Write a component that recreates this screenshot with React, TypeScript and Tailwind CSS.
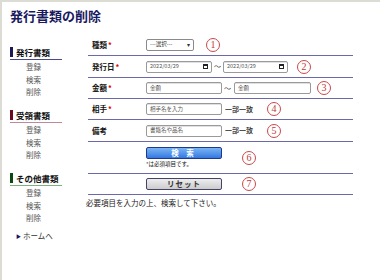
import React from "react";

const Circ = ({ n, cls }: { n: string; cls: string }) => (
  <span
    className={`flex items-center justify-center w-[14px] h-[14px] rounded-full border border-[#c84848] text-[#c03838] text-[10px] leading-none font-['Liberation_Serif',serif] ${cls}`}
  >
    {n}
  </span>
);

const Req = () => <span className="text-[#e00000] ml-[1px]">*</span>;

const Box = ({ w, children }: { w: string; children?: React.ReactNode }) => (
  <div
    className={`${w} h-[12px] border border-[#9a9a9a] rounded-[2px] bg-white flex items-center px-[3px] text-[5.5px] text-[#555] shadow-[inset_0_1px_0_#e0e0e0]`}
  >
    {children}
  </div>
);

const Section = ({
  title,
  bar,
  line,
  last,
}: {
  title: string;
  bar: string;
  line: string;
  last?: boolean;
}) => (
  <div className={last ? "" : "mb-[11.5px]"}>
    <div className={`border-b ${line} pb-[2px]`}>
      <span
        className={`block border-l-[3px] ${bar} pl-[3px] text-[8.5px] leading-[10px] font-bold text-[#111]`}
      >
        {title}
      </span>
    </div>
    <ul className="mt-[1px] pl-[16px]">
      {["登録", "検索", "削除"].map((t) => (
        <li key={t} className="text-[7.5px] leading-[12.5px] text-[#555]">
          {t}
        </li>
      ))}
    </ul>
  </div>
);

export default function App() {
  const row = "flex items-center border-b border-[#6a6aaa]";
  const label = "w-[58px] pl-[4px] text-[7.5px] font-bold text-[#111]";
  return (
    <div className="w-[380px] h-[280px] bg-white border-t-2 border-l-2 border-[#dcdcd4] overflow-hidden font-['Noto_Sans_CJK_JP',sans-serif]">
      <h1 className="pl-2 pt-[6px] text-[13px] leading-[16px] font-bold text-[#1a1a60]">
        発行書類の削除
      </h1>
      <div className="flex">
        <div className="ml-2 w-[52px] pt-[23px]">
          <Section title="発行書類" bar="border-[#1a1a5a]" line="border-[#4a4a8a]" />
          <Section title="受領書類" bar="border-[#6a0a1a]" line="border-[#c08898]" />
          <Section title="その他書類" bar="border-[#0a4a10]" line="border-[#80b080]" last />
          <div className="mt-[5px] pl-[6px] flex items-center text-[7.5px] leading-[12.5px] text-[#333]">
            <span className="text-[5px] text-[#1a1a5a] mr-[2px]">▶</span>
            ホームへ
          </div>
        </div>
        <div className="ml-[24px] w-[267px] pt-[10px]">
          <div className="ml-[2px] w-[265px]">
            <div className={`${row} h-[22px]`}>
              <div className={label}>
                種類<Req />
              </div>
              <div className="w-[48px] h-[12px] border border-[#8a8a8a] rounded-[2px] bg-white flex items-center justify-between px-[3px] text-[5.5px] text-[#333]">
                <span>---選択---</span>
                <span className="text-[6px]">▾</span>
              </div>
              <Circ n="1" cls="ml-[12px]" />
            </div>
            <div className={`${row} h-[22px]`}>
              <div className={label}>
                発行日<Req />
              </div>
              <Box w="w-[66px] justify-between text-[#222]">
                <span className="text-[5.5px]">2022/03/29</span>
                <span className="w-[5px] h-[5px] border border-[#222] border-t-2"></span>
              </Box>
              <span className="mx-[2px] text-[7px] text-[#333]">～</span>
              <Box w="w-[65px] justify-between text-[#222]">
                <span className="text-[5.5px]">2022/03/29</span>
                <span className="w-[5px] h-[5px] border border-[#222] border-t-2"></span>
              </Box>
              <Circ n="2" cls="ml-[9px]" />
            </div>
            <div className={`${row} h-[21px]`}>
              <div className={label}>
                金額<Req />
              </div>
              <Box w="w-[76px]">金額</Box>
              <span className="ml-[2px] mr-[3px] text-[7px] text-[#333]">～</span>
              <Box w="w-[77px]">金額</Box>
              <Circ n="3" cls="ml-[6px]" />
            </div>
            <div className={`${row} h-[21px]`}>
              <div className={label}>
                相手<Req />
              </div>
              <Box w="w-[76px]">相手名を入力</Box>
              <span className="ml-[3px] text-[7px] font-medium text-[#222]">一部一致</span>
              <Circ n="4" cls="ml-[14px]" />
            </div>
            <div className={`${row} h-[22px]`}>
              <div className={label}>備考</div>
              <Box w="w-[76px]">書籍名や品名</Box>
              <span className="ml-[3px] text-[7px] font-medium text-[#222]">一部一致</span>
              <Circ n="5" cls="ml-[14px]" />
            </div>
            <div className={`${row} h-[32px]`}>
              <div className="w-[58px]" />
              <div className="flex flex-col">
                <button className="w-[76px] h-[12px] rounded-[2px] border border-[#1e3a8a] bg-gradient-to-b from-[#7ab4f4] to-[#3478e0] text-white text-[7.5px] leading-none font-bold tracking-[3px]">
                  検 索
                </button>
                <span className="mt-[2px] text-[5.5px] leading-[7px] text-[#111]">
                  *は必須項目です。
                </span>
              </div>
              <Circ n="6" cls="ml-[20px]" />
            </div>
            <div className={`${row} h-[21px]`}>
              <div className="w-[58px]" />
              <button className="w-[76px] h-[12px] rounded-[2px] border border-[#444466] bg-gradient-to-b from-[#eeeeee] to-[#cccccc] text-[#333] text-[7.5px] leading-none font-bold tracking-[1px]">
                リセット
              </button>
              <Circ n="7" cls="ml-[20px]" />
            </div>
          </div>
          <div className="mt-[3px] text-[7.5px] leading-[10px] text-[#222]">
            必要項目を入力の上、検索して下さい。
          </div>
        </div>
      </div>
    </div>
  );
}
